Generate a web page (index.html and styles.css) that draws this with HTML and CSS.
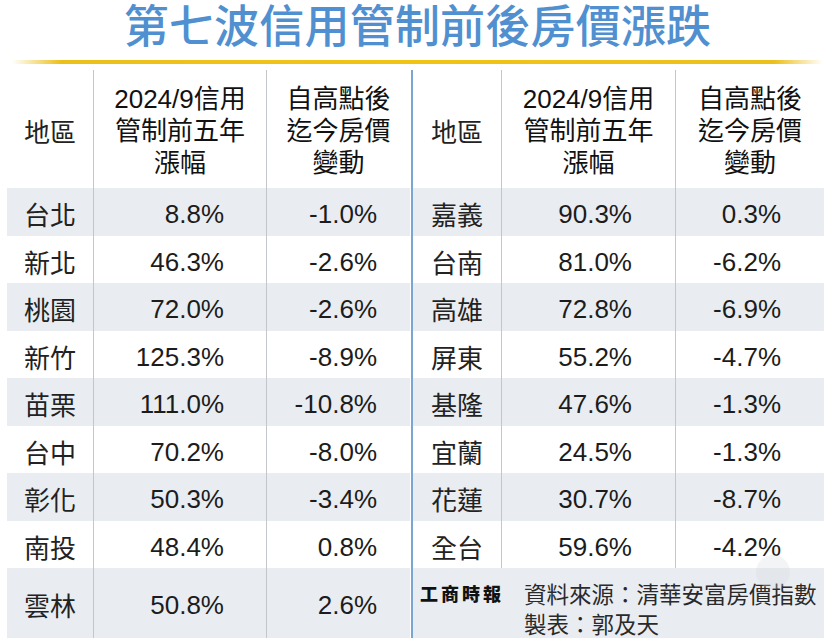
FILE: index.html
```html
<!DOCTYPE html>
<html lang="zh-Hant">
<head>
<meta charset="utf-8">
<title>第七波信用管制前後房價漲跌</title>
<link rel="stylesheet" href="styles.css">
</head>
<body>
<div class="page">
  <h1 class="title">第七波信用管制前後房價漲跌</h1>
  <div class="rule"></div>
  <div class="board">
    <div class="divider"></div>

    <div class="c h name b">地區</div>
    <div class="c h b">2024/9信用<br>管制前五年<br>漲幅</div>
    <div class="c h">自高點後<br>迄今房價<br>變動</div>
    <div class="c h name b">地區</div>
    <div class="c h b">2024/9信用<br>管制前五年<br>漲幅</div>
    <div class="c h">自高點後<br>迄今房價<br>變動</div>

    <div class="c g name b">台北</div><div class="c g n2 b">8.8%</div><div class="c g n3">-1.0%</div>
    <div class="c g name b">嘉義</div><div class="c g n5 b">90.3%</div><div class="c g n6">0.3%</div>

    <div class="c name b">新北</div><div class="c n2 b">46.3%</div><div class="c n3">-2.6%</div>
    <div class="c name b">台南</div><div class="c n5 b">81.0%</div><div class="c n6">-6.2%</div>

    <div class="c g name b">桃園</div><div class="c g n2 b">72.0%</div><div class="c g n3">-2.6%</div>
    <div class="c g name b">高雄</div><div class="c g n5 b">72.8%</div><div class="c g n6">-6.9%</div>

    <div class="c name b">新竹</div><div class="c n2 b">125.3%</div><div class="c n3">-8.9%</div>
    <div class="c name b">屏東</div><div class="c n5 b">55.2%</div><div class="c n6">-4.7%</div>

    <div class="c g name b">苗栗</div><div class="c g n2 b">111.0%</div><div class="c g n3">-10.8%</div>
    <div class="c g name b">基隆</div><div class="c g n5 b">47.6%</div><div class="c g n6">-1.3%</div>

    <div class="c name b">台中</div><div class="c n2 b">70.2%</div><div class="c n3">-8.0%</div>
    <div class="c name b">宜蘭</div><div class="c n5 b">24.5%</div><div class="c n6">-1.3%</div>

    <div class="c g name b">彰化</div><div class="c g n2 b">50.3%</div><div class="c g n3">-3.4%</div>
    <div class="c g name b">花蓮</div><div class="c g n5 b">30.7%</div><div class="c g n6">-8.7%</div>

    <div class="c name b">南投</div><div class="c n2 b">48.4%</div><div class="c n3">0.8%</div>
    <div class="c name b">全台</div><div class="c n5 b">59.6%</div><div class="c n6">-4.2%</div>

    <div class="c g name b">雲林</div><div class="c g n2 b">50.8%</div><div class="c g n3">2.6%</div>
    <div class="footer">
      <div class="logo">工商時報</div>
      <div class="source">資料來源：清華安富房價指數<br>製表：郭及天</div>
    </div>
  </div>
  <div class="ghost"></div>
</div>
</body>
</html>
```

FILE: styles.css
```css
html, body {
  margin: 0;
  padding: 0;
  background: #ffffff;
}

.page {
  position: relative;
  width: 835px;
  height: 638px;
  overflow: hidden;
  font-family: "Liberation Sans", "Noto Sans CJK TC", sans-serif;
  color: #1c1c1c;
}

.title {
  margin: 0;
  height: 60px;
  font-family: "Noto Sans CJK TC", sans-serif;
  font-weight: 500;
  font-size: 45px;
  line-height: 48px;
  letter-spacing: 0.2px;
  text-align: center;
  color: #5090d0;
}

.rule {
  height: 4px;
  margin: 0 12px;
  background: linear-gradient(90deg, rgba(240, 196, 20, 0) 0%, #ecc01c 6%, #f0c414 50%, #ecc01c 94%, rgba(240, 196, 20, 0) 100%);
}

.board {
  display: grid;
  margin: 6px 0 0 7px;
  grid-template-columns: 87px 173px 143px 3px 89px 174px 148px;
  grid-template-rows: 118px repeat(4, 48px 47px) 70px;
  width: 817px;
}

.divider {
  grid-column: 4;
  grid-row: 1 / -1;
  background: #7aa6d3;
  margin: 0 0.5px;
}

.c {
  display: flex;
  align-items: center;
  font-size: 26px;
  line-height: 30px;
  padding-top: 4px;
  box-sizing: border-box;
  white-space: nowrap;
}

.b {
  border-right: 1px solid #c3c7cc;
}

.h {
  justify-content: center;
  text-align: center;
  font-size: 26px;
  line-height: 32px;
  color: #111111;
  padding-top: 3px;
}

.name {
  justify-content: center;
  font-family: "Noto Sans CJK TC", sans-serif;
  color: #222222;
}

.g {
  background: #e9edf2;
}

.n2 { justify-content: flex-end; padding-right: 42px; }
.n3 { justify-content: flex-end; padding-right: 33px; }
.n5 { justify-content: flex-end; padding-right: 43px; }
.n6 { justify-content: flex-end; padding-right: 43px; }

.footer {
  grid-column: 5 / 8;
  background: #e9edf2;
  display: flex;
  align-items: flex-start;
  gap: 20px;
  padding: 10px 0 0 7px;
  box-sizing: border-box;
}

.logo {
  font-family: "Noto Sans CJK TC", sans-serif;
  font-weight: 900;
  font-size: 18px;
  letter-spacing: 3px;
  line-height: 30px;
  color: #111111;
}

.source {
  font-family: "Noto Sans CJK TC", sans-serif;
  font-size: 22.5px;
  line-height: 30px;
  color: #2a2a2a;
  white-space: nowrap;
}

.ghost {
  position: absolute;
  left: 756px;
  top: 555px;
  width: 34px;
  height: 34px;
  border-radius: 50%;
  background: rgba(215, 218, 222, 0.3);
}
```
